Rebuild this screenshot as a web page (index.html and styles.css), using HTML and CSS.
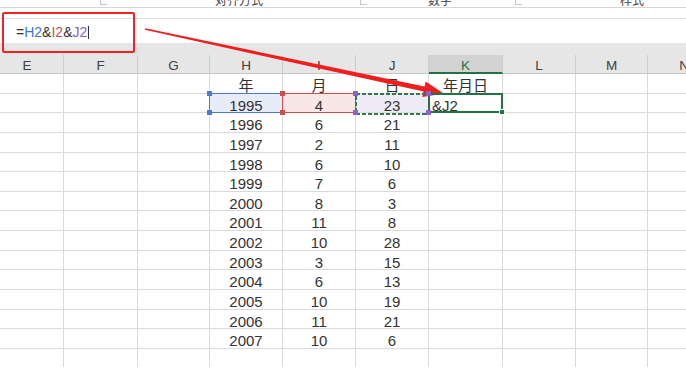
FILE: index.html
```html
<!DOCTYPE html>
<html lang="zh-CN">
<head>
    <meta charset="UTF-8">
    <meta name="viewport" content="width=device-width, initial-scale=1.0">
    <title>年月日合并</title>
    <link rel="stylesheet" href="styles.css">
</head>
<body>
    <div class="ribbon">
        <div class="ribbon-row">
            <span class="launcher l1"></span>
            <span class="group g1">对齐方式</span>
            <span class="launcher l2"></span>
            <span class="group g2">数字</span>
            <span class="launcher l3"></span>
            <span class="group g3">样式</span>
        </div>
    </div>

    <div class="formula-bar">
        <span class="formula">=<b class="r-h">H2</b>&amp;<b class="r-i">I2</b>&amp;<b class="r-j">J2</b><i class="caret"></i></span>
    </div>

    <div class="sheet-wrap">
        <div class="sheet">
            <div class="col">E</div><div class="col">F</div><div class="col">G</div><div class="col">H</div><div class="col">I</div>
            <div class="col">J</div><div class="col col-on">K</div><div class="col">L</div><div class="col">M</div><div class="col">N</div>

            <div></div><div></div><div></div><div>年</div><div>月</div><div>日</div><div>年月日</div><div></div><div></div><div></div>

            <div></div><div></div><div></div>
            <div class="ref ref-h">1995<i class="hd tl"></i><i class="hd tr"></i><i class="hd bl"></i><i class="hd br"></i></div>
            <div class="ref ref-i">4<i class="hd tl"></i><i class="hd tr"></i><i class="hd bl"></i><i class="hd br"></i></div>
            <div class="ref ref-j">23
                <svg class="ants" width="75" height="22" viewBox="0 0 75 22"><rect x="1" y="1" width="73" height="20" fill="none" stroke="#2e7a4c" stroke-width="2" stroke-dasharray="4 2"/></svg>
                <i class="hd tl"></i><i class="hd tr"></i><i class="hd bl"></i><i class="hd br"></i>
            </div>
            <div class="active">&amp;J2<i class="fill"></i></div>
            <div></div><div></div><div></div>

            <div></div><div></div><div></div><div>1996</div><div>6</div><div>21</div><div></div><div></div><div></div><div></div>
            <div></div><div></div><div></div><div>1997</div><div>2</div><div>11</div><div></div><div></div><div></div><div></div>
            <div></div><div></div><div></div><div>1998</div><div>6</div><div>10</div><div></div><div></div><div></div><div></div>
            <div></div><div></div><div></div><div>1999</div><div>7</div><div>6</div><div></div><div></div><div></div><div></div>
            <div></div><div></div><div></div><div>2000</div><div>8</div><div>3</div><div></div><div></div><div></div><div></div>
            <div></div><div></div><div></div><div>2001</div><div>11</div><div>8</div><div></div><div></div><div></div><div></div>
            <div></div><div></div><div></div><div>2002</div><div>10</div><div>28</div><div></div><div></div><div></div><div></div>
            <div></div><div></div><div></div><div>2003</div><div>3</div><div>15</div><div></div><div></div><div></div><div></div>
            <div></div><div></div><div></div><div>2004</div><div>6</div><div>13</div><div></div><div></div><div></div><div></div>
            <div></div><div></div><div></div><div>2005</div><div>10</div><div>19</div><div></div><div></div><div></div><div></div>
            <div></div><div></div><div></div><div>2006</div><div>11</div><div>21</div><div></div><div></div><div></div><div></div>
            <div></div><div></div><div></div><div>2007</div><div>10</div><div>6</div><div></div><div></div><div></div><div></div>
            <div></div><div></div><div></div><div></div><div></div><div></div><div></div><div></div><div></div><div></div>
        </div>
    </div>

    <!-- annotation drawn over the screenshot -->
    <div class="mark-box"></div>
    <svg class="mark-arrow" width="686" height="376" viewBox="0 0 686 376">
        <polygon points="145.2,28.2 424.5,86.6 425.7,81.4 443.6,93.6 422.3,97 423.5,91.6 144.8,29.8" fill="#f01e1e"/>
    </svg>
</body>
</html>
```

FILE: styles.css
```css
*{
    margin: 0;
    padding: 0;
    box-sizing: border-box;
}
body{
    width: 686px;
    height: 376px;
    overflow: hidden;
    position: relative;
    background: #fff;
    font-family: "Liberation Sans", "Noto Sans CJK SC", sans-serif;
    color: #333;
}

/* ribbon (cut off at the top) */
.ribbon{
    height: 8px;
    overflow: hidden;
    background: #fff;
    border-bottom: 1px solid #d6d6d6;
}
.ribbon-row{
    display: flex;
    align-items: flex-start;
    margin-top: -6px;
    font: 12px/12px "Noto Sans CJK SC", sans-serif;
    color: #444;
}
.launcher{
    width: 7px;
    height: 10px;
    margin-top: 1px;
    border-left: 1px solid #c4c4c4;
    border-bottom: 1px solid #c4c4c4;
}
.l1{ margin-left: 100px; }
.g1{ margin-left: 108px; }
.l2{ margin-left: 97px; }
.g2{ margin-left: 61px; }
.l3{ margin-left: 63px; }
.g3{ margin-left: 98px; }

/* formula bar */
.formula-bar{
    margin-top: 10px;
    height: 25px;
    background: #fff;
    border-top: 1px solid #dedede;
    padding: 1px 0 0 16px;
    font-size: 14px;
    line-height: 24px;
    color: #333;
}
.formula b{
    font-weight: normal;
}
.r-h{ color: #3f76d0; }
.r-i{ color: #d84a4a; }
.r-j{ color: #8e62c8; }
.caret{
    display: inline-block;
    width: 1px;
    height: 13px;
    margin-left: 1px;
    vertical-align: -2px;
    background: #333;
}

/* sheet */
.sheet-wrap{
    background: #e6e6e6;
    padding-top: 12px;
}
.sheet{
    display: grid;
    grid-template-columns: 73px 74px 72px 73px 73px 73px 74px 73px 72px 73px;
    grid-template-rows: 19px repeat(15, 19.64px);
    width: 720px;
    height: 312px;
    margin-left: -9px;
    overflow: hidden;
    background: #fff;
}
.sheet > div{
    position: relative;
    border-right: 1px solid #dadada;
    border-bottom: 1px solid #dadada;
    font-size: 15px;
    line-height: 19px;
    padding-top: 2px;
    text-align: center;
    color: #333;
}
.sheet > .col{
    background: #e6e6e6;
    border-right: 1px solid #cbcbcb;
    border-bottom: 1px solid #c6c6c6;
    font-size: 13.5px;
    padding-top: 1px;
    color: #404040;
}
.sheet > .col-on{
    background: #d3d3d3;
    border-bottom: 2px solid #217346;
    color: #217346;
}

/* formula references */
.ref::before{
    content: "";
    position: absolute;
    left: -1px;
    top: -1px;
    right: -1px;
    bottom: -1px;
    z-index: 1;
}
.ref-h{ background: #e6edf9; }
.ref-h::before{ border: 1px solid #4a7bd2; }
.ref-i{ background: #f9e7e7; }
.ref-i::before{ border: 1px solid #cf4d4d; }
.ref-j{ background: #efebf6; }
.ants{
    position: absolute;
    left: -1px;
    top: -1px;
    width: 75px;
    height: 22px;
    z-index: 1;
}
.hd{
    position: absolute;
    width: 5px;
    height: 5px;
    z-index: 2;
}
.ref-h .hd{ background: #4a7bd2; }
.ref-i .hd{ background: #cf4d4d; }
.ref-j .hd{ background: #8e62c8; }
.tl{ left: -3px; top: -3px; }
.tr{ right: -3px; top: -3px; }
.bl{ left: -3px; bottom: -3px; }
.br{ right: -3px; bottom: -3px; }

/* active cell */
.sheet > .active{
    text-align: left;
    padding-left: 3px;
}
.active::before{
    content: "";
    position: absolute;
    left: -1px;
    top: -1px;
    right: -1px;
    bottom: -1px;
    border: 2px solid #217346;
    z-index: 1;
}
.fill{
    position: absolute;
    right: -3px;
    bottom: -3px;
    width: 6px;
    height: 6px;
    background: #217346;
    border: 1px solid #fff;
    z-index: 2;
}

/* red annotation */
.mark-box{
    position: absolute;
    left: 2px;
    top: 12px;
    width: 133px;
    height: 41px;
    border: 2px solid #f52222;
    border-radius: 2px;
}
.mark-arrow{
    position: absolute;
    left: 0;
    top: 0;
    pointer-events: none;
}
```
